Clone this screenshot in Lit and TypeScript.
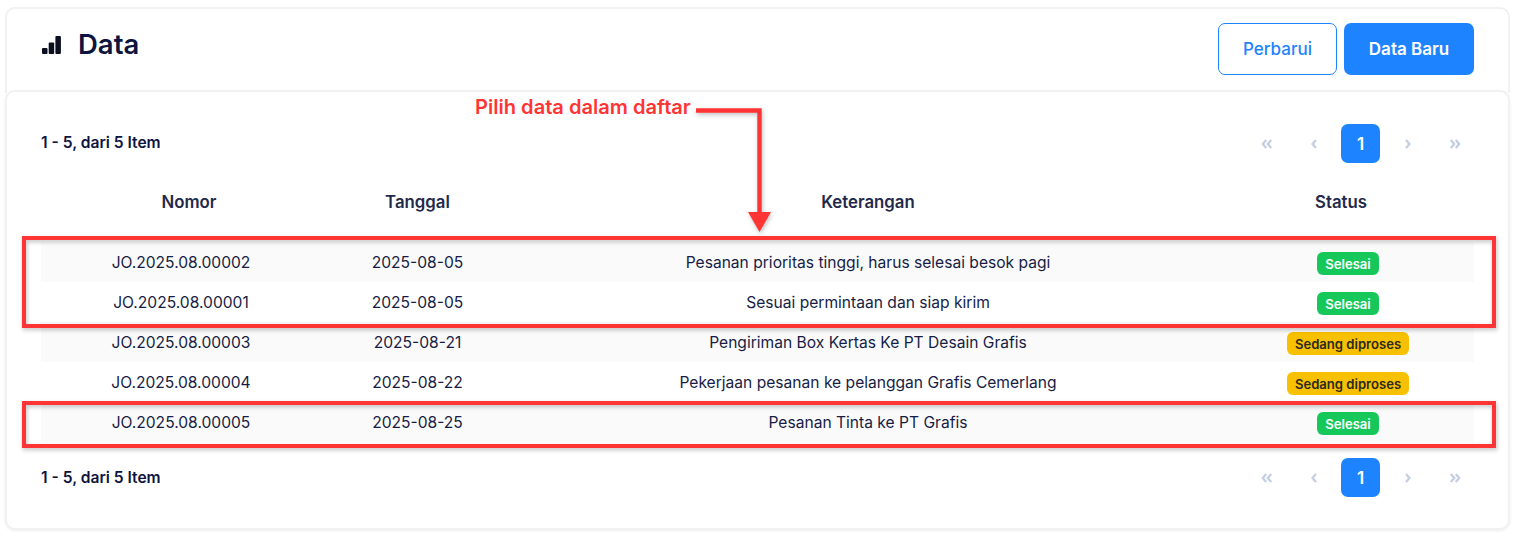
import { LitElement, html, css, svg } from "lit";
import { customElement } from "lit/decorators.js";

const rows = [
  ["JO.2025.08.00002", "2025-08-05", "Pesanan prioritas tinggi, harus selesai besok pagi", "Selesai"],
  ["JO.2025.08.00001", "2025-08-05", "Sesuai permintaan dan siap kirim", "Selesai"],
  ["JO.2025.08.00003", "2025-08-21", "Pengiriman Box Kertas Ke PT Desain Grafis", "Sedang diproses"],
  ["JO.2025.08.00004", "2025-08-22", "Pekerjaan pesanan ke pelanggan Grafis Cemerlang", "Sedang diproses"],
  ["JO.2025.08.00005", "2025-08-25", "Pesanan Tinta ke PT Grafis", "Selesai"],
];

const chev = (d: string) => html`<svg class="chev" width="16" height="16" viewBox="0 0 16 16" fill="none" stroke="#c5cee2" stroke-width="2.3"><path d=${d}></path></svg>`;

@customElement("app-root")
export class AppRoot extends LitElement {
  static styles = css`
    :host { display: block; position: relative; height: 536px; background: #fff; font-family: Inter, "Noto Sans", sans-serif; color: #0d1440; overflow: hidden; }
    .page { padding: 7px 9px 6px 5px; display: flex; flex-direction: column; }
    .head { height: 86px; margin-bottom: -3px; box-sizing: border-box; background: #fff; border: 2px solid #f1f1f3; border-bottom: none; border-radius: 10px 10px 0 0; padding: 14px 34px 0 34px; display: flex; justify-content: space-between; align-items: flex-start; }
    .title { display: flex; align-items: center; gap: 17px; font-size: 27.5px; font-weight: 600; line-height: 42px; height: 42px; }
    .title svg { margin-top: 1px; }
    .btns { display: flex; gap: 7px; }
    .btn { height: 52px; box-sizing: border-box; border-radius: 7px; font: 500 17px Inter, sans-serif; display: flex; align-items: center; justify-content: center; }
    .outline { width: 119px; border: 1px solid #1e83ff; color: #1e83ff; background: #fff; }
    .solid { width: 130px; background: #1e83ff; color: #fff; font-weight: 600; }
    .card { height: 440px; box-sizing: border-box; border: 2px solid #f1f1f3; border-radius: 10px; box-shadow: 0 1px 3px rgba(0,0,0,.07); padding: 32px 34px 0 34px; background: #fff; }
    .bar { display: flex; justify-content: space-between; align-items: center; height: 39px; }
    .count { font-size: 15.6px; font-weight: 600; padding-bottom: 2px; }
    .pager { display: flex; align-items: center; margin-right: 1px; }
    .pg { width: 39px; height: 39px; display: flex; align-items: center; justify-content: center; }
    .pg + .pg { margin-left: 7.5px; }
    .cur { background: #1e83ff; color: #fff; border-radius: 7px; font-size: 17px; font-weight: 600; }
    .grid { display: grid; grid-template-columns: 280px 193px 708px 252px; margin-top: 19px; }
    .th { height: 40px; font-size: 16.8px; font-weight: 600; color: #23294a; display: flex; align-items: center; justify-content: center; }
    .pl { padding-left: 16px; }
    .pr { padding-right: 14px; }
    .rowhead { height: 40px; grid-column: 1 / -1; display: grid; grid-template-columns: subgrid; }
    .row { grid-column: 1 / -1; display: grid; grid-template-columns: subgrid; height: 40px; }
    .row.odd { background: #fafafa; }
    .td { font-size: 15.6px; color: #171d45; display: flex; align-items: center; justify-content: center; white-space: nowrap; }
    .rowgap { grid-column: 1 / -1; height: 20px; }
    .badge { height: 23px; margin-top: 3px; box-sizing: border-box; padding: 0 8px; border-radius: 6px; font-size: 13.1px; font-weight: 600; display: flex; align-items: center; }
    .ok { background: #16c75a; color: #fff; }
    .wait { background: #f7c000; color: #2a2a1f; }
    .foot { margin-top: 16px; }
    .foot .count { padding-bottom: 0; }
    .note { position: absolute; left: 475px; top: 95px; font-size: 20.1px; line-height: 24px; font-weight: 600; color: #ff3535; white-space: nowrap; }
    .overlay { position: absolute; left: 0; top: 0; pointer-events: none; filter: drop-shadow(1px 2px 2px rgba(0,0,0,.25)); }
  `;

  render() {
    return html`
      <div class="page">
        <div class="head">
          <div class="title">
            <svg width="20" height="18" viewBox="0 0 20 18" fill="#0b0f1f"><rect x="1" y="12" width="5.5" height="6" rx="1"></rect><rect x="7.7" y="6.5" width="5.5" height="11.5" rx="1"></rect><rect x="14.4" y="0" width="5.5" height="18" rx="1"></rect></svg>
            <span>Data</span>
          </div>
          <div class="btns">
            <div class="btn outline">Perbarui</div>
            <div class="btn solid">Data Baru</div>
          </div>
        </div>
        <div class="card">
          ${this.bar()}
          <div class="grid">
            <div class="rowhead">
              <div class="th pl">Nomor</div>
              <div class="th">Tanggal</div>
              <div class="th">Keterangan</div>
              <div class="th pr">Status</div>
            </div>
            <div class="rowgap"></div>
            ${rows.map((r, i) => html`
              <div class="row ${i % 2 === 0 ? "odd" : ""}">
                <div class="td">${r[0]}</div>
                <div class="td">${r[1]}</div>
                <div class="td">${r[2]}</div>
                <div class="td"><span class="badge ${r[3] === "Selesai" ? "ok" : "wait"}">${r[3]}</span></div>
              </div>`)}
          </div>
          <div class="foot">${this.bar()}</div>
        </div>
      </div>
      <svg class="overlay" width="1519" height="536" fill="none">
        ${svg`
          <rect x="24" y="238" width="1470" height="88" stroke="#ff3535" stroke-width="4"></rect>
          <rect x="24" y="403" width="1470" height="43" stroke="#ff3535" stroke-width="4"></rect>
          <path d="M696 110.5H759.5V215" stroke="#ff3535" stroke-width="4.4"></path>
          <path d="M748 212H771L759.5 232Z" fill="#ff3535"></path>
        `}
      </svg>
      <div class="note">Pilih data dalam daftar</div>
    `;
  }

  bar() {
    return html`<div class="bar">
      <div class="count">1 - 5, dari 5 Item</div>
      <div class="pager">
        <div class="pg">${chev("M6.2 4 2.8 8l3.4 4M11.2 4 7.8 8l3.4 4")}</div>
        <div class="pg">${chev("M10 4 6.6 8l3.4 4")}</div>
        <div class="pg cur">1</div>
        <div class="pg">${chev("M7 4l3.4 4L7 12")}</div>
        <div class="pg">${chev("M4.8 4l3.4 4-3.4 4M9.8 4l3.4 4-3.4 4")}</div>
      </div>
    </div>`;
  }
}
